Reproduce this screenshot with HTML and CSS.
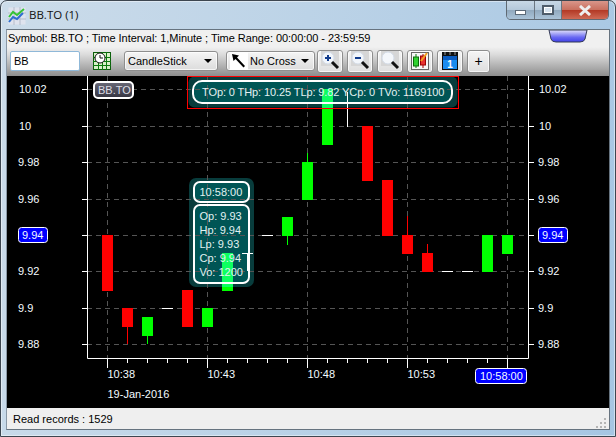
FILE: index.html
```html
<!DOCTYPE html>
<html lang="en">
<head>
<meta charset="utf-8">
<title>BB.TO (1)</title>
<link rel="stylesheet" href="styles.css">
</head>
<body>
<div class="window">
  <header class="titlebar">
    <svg class="app-icon" width="18" height="18" viewBox="0 0 18 18">
      <rect x="0.5" y="0.5" width="17" height="17" fill="#dfe3ee"/>
      <path d="M0 6H18M0 12H18M6 0V18M12 0V18" stroke="#b4bccb" fill="none"/>
      <path d="M1 15L5 10L9 12L15 6" stroke="#2f6fd0" stroke-width="2" fill="none"/>
      <path d="M1 10L5 5L9 8L16 2" stroke="#35c435" stroke-width="2" fill="none"/>
    </svg>
    <span class="title">BB.TO (1)</span>
    <div class="caption">
      <span class="cap cap-min"><i class="glyph-min"></i></span>
      <span class="cap cap-max"><i class="glyph-max"></i></span>
      <span class="cap cap-close">
        <svg width="14" height="11" viewBox="0 0 14 11"><path d="M2 1L12 10M12 1L2 10" stroke="#eeeeee" stroke-width="3" fill="none"/></svg>
      </span>
    </div>
  </header>

  <div class="client">
    <div class="infobar">
      <span>Symbol: BB.TO ; Time Interval: 1,Minute ; Time Range: 00:00:00 - 23:59:59</span>
      <svg class="tab" width="40" height="13" viewBox="0 0 40 13">
        <defs><linearGradient id="tabg" x1="0" y1="0" x2="0" y2="1"><stop offset="0" stop-color="#e4e4fb"/><stop offset="0.6" stop-color="#6a6af2"/><stop offset="1" stop-color="#4040e8"/></linearGradient></defs>
        <path d="M1 0L3 9Q4 12 8 12H32Q36 12 37 9L39 0Z" fill="url(#tabg)" stroke="#333a55"/>
      </svg>
    </div>

    <div class="toolbar">
      <div class="search">BB</div>
      <span class="plain-icon">
        <svg width="18" height="18" viewBox="0 0 18 18">
          <rect x="0.5" y="0.5" width="17" height="17" fill="#d8f0c8" stroke="#0d5e0d"/>
          <path d="M0 5.500H18M0 9.500H18M0 13.500H18M5.500 0V18M9.500 0V18M13.500 0V18" stroke="#0d7a0d" fill="none"/>
          <circle cx="7" cy="6" r="5" fill="#fff" stroke="#111"/>
          <path d="M7 3V6H10" stroke="#111" fill="none"/>
        </svg>
      </span>
      <div class="combo combo-type"><span>CandleStick</span><i class="caret"></i></div>
      <div class="combo combo-cross">
        <svg class="cross-icon" width="18" height="18" viewBox="0 0 18 18">
          <rect width="18" height="18" fill="#fff"/>
          <path d="M2 2L9 3.500L7 5.500L15 14L13.500 15.500L5.500 7L3.500 9Z" fill="#000"/>
        </svg>
        <span>No Cross</span><i class="caret"></i>
      </div>
      <div class="btn-group">
        <button class="tool">
          <svg width="20" height="20" viewBox="0 0 20 20"><rect x="1" width="18" height="15" fill="#d6d6d6"/><circle cx="8" cy="7" r="6" fill="#f2f6fb" stroke="#d4dce8"/><path d="M5 7H11M8 4V10" stroke="#123c8c" stroke-width="2"/><path d="M12 11L18 17" stroke="#111" stroke-width="3"/></svg>
        </button>
        <button class="tool">
          <svg width="20" height="20" viewBox="0 0 20 20"><rect x="1" width="18" height="15" fill="#d6d6d6"/><circle cx="8" cy="7" r="6" fill="#f2f6fb" stroke="#d4dce8"/><path d="M5 7H11" stroke="#123c8c" stroke-width="2"/><path d="M12 11L18 17" stroke="#111" stroke-width="3"/></svg>
        </button>
        <button class="tool">
          <svg width="20" height="20" viewBox="0 0 20 20"><rect x="1" width="18" height="15" fill="#d6d6d6"/><circle cx="8" cy="7" r="6" fill="#f4f7fb" stroke="#d4dce8"/><path d="M12 11L18 17" stroke="#111" stroke-width="3"/></svg>
        </button>
        <button class="tool">
          <svg width="20" height="20" viewBox="0 0 20 20"><rect x="1.500" y="1.500" width="17" height="17" fill="#f6f6f6" stroke="#666"/><path d="M6 3V17" stroke="#0a7a0a"/><rect x="3.500" y="6" width="5" height="9" fill="#30d030" stroke="#0a6a0a"/><path d="M13 3V17" stroke="#a00"/><rect x="10.500" y="5" width="5" height="9" fill="#e83030" stroke="#900"/><path d="M11 10L17 2" stroke="#f0a020" stroke-width="2"/></svg>
        </button>
        <button class="tool">
          <svg width="20" height="20" viewBox="0 0 20 20"><rect x="2" y="1" width="16" height="18" fill="#111"/><rect x="3" y="5" width="14" height="13" fill="#1a8cf0"/><rect x="3" y="5" width="14" height="4" fill="#0b5cc0"/><path d="M5 1V4M10 1V4M15 1V4" stroke="#999"/><text class="cal-num" x="10" y="17">1</text></svg>
        </button>
        <button class="tool tool-plus">+</button>
      </div>
    </div>

    <svg class="chart" width="602" height="332" viewBox="7 76 602 332">
      <defs>
        <linearGradient id="symg" x1="0" y1="0" x2="0" y2="1"><stop offset="0" stop-color="#6a6a78"/><stop offset="1" stop-color="#33333f"/></linearGradient>
      </defs>
      <rect class="bg" x="7" y="76" width="602" height="332"/>

      <!-- tooltip panels sit beneath the grid and candles -->
      <rect class="panel" x="188.500" y="76.500" width="269" height="31" rx="6"/>
      <rect class="panel-in" x="193" y="81" width="259" height="22" rx="9"/>
      <rect class="panel" x="189" y="178" width="65" height="109" rx="7"/>
      <rect class="panel-in" x="194" y="182" width="55" height="20" rx="6"/>
      <rect class="panel-in" x="194" y="205" width="55" height="78" rx="6"/>

      <path class="grid" d="M87 89.500H528M87 126.500H528M87 162.500H528M87 199.500H528M87 235.500H528M87 271.500H528M87 308.500H528M87 344.500H528M107.500 76V358M207.500 76V358M307.500 76V358M407.500 76V358M507.500 76V358"/>

      <path class="axis" d="M87.500 76V358.500H528.500V76"/>
      <path class="axis" d="M82 89.500H87M82 126.500H87M82 162.500H87M82 199.500H87M82 235.500H87M82 271.500H87M82 308.500H87M82 344.500H87M528 89.500H534M528 126.500H534M528 162.500H534M528 199.500H534M528 235.500H534M528 271.500H534M528 308.500H534M528 344.500H534"/>
      <path class="axis" d="M107.500 358V368M207.500 358V368M307.500 358V368M407.500 358V368M507.500 358V368M127.500 358V363M147.500 358V363M167.500 358V363M187.500 358V363M227.500 358V363M247.500 358V363M267.500 358V363M287.500 358V363M327.500 358V363M347.500 358V363M367.500 358V363M387.500 358V363M427.500 358V363M447.500 358V363M467.500 358V363M487.500 358V363"/>

      <!-- wicks -->
      <path class="wick-r" d="M127.500 327V344M407.500 216V235M427.500 244V253"/>
      <path class="wick-g" d="M147.500 336V344M287.500 236V245M307.500 153V162"/>
      <path class="wick-w" d="M247.500 253V271M347.500 92V127"/>
      <path class="doji" d="M162 308.500H173M242 253.500H253M262 235.500H273M442 271.500H453M462 271.500H473"/>

      <!-- candle bodies -->
      <rect class="red" x="102" y="235" width="11" height="56"/>
      <rect class="red" x="122" y="308" width="11" height="19"/>
      <rect class="green" x="142" y="317" width="11" height="19"/>
      <rect class="red" x="182" y="290" width="11" height="37"/>
      <rect class="green" x="202" y="308" width="11" height="19"/>
      <rect class="green" x="222" y="287" width="11" height="4"/>
      <rect class="tint" x="222" y="253" width="11" height="34"/>
      <rect class="green" x="282" y="217" width="11" height="19"/>
      <rect class="green" x="302" y="162" width="11" height="38"/>
      <rect class="green" x="322" y="108" width="11" height="37"/>
      <rect class="tint" x="322" y="89" width="11" height="19"/>
      <rect class="red" x="362" y="126" width="11" height="55"/>
      <rect class="red" x="382" y="180" width="11" height="56"/>
      <rect class="red" x="402" y="235" width="11" height="19"/>
      <rect class="red" x="422" y="253" width="11" height="19"/>
      <rect class="green" x="482" y="235" width="11" height="37"/>
      <rect class="green" x="502" y="235" width="11" height="19"/>

      <!-- tooltip outlines and text -->
      <rect class="outline" x="193" y="81" width="259" height="22" rx="9"/>
      <rect class="alert" x="187.500" y="76.500" width="271" height="32"/>
      <text class="lbl tip tip-long" x="202" y="96">TOp: 0 THp: 10.25 TLp: 9.82 YCp: 0 TVo: 1169100</text>
      <rect class="outline" x="194" y="182" width="55" height="20" rx="6"/>
      <rect class="outline" x="194" y="205" width="55" height="78" rx="6"/>
      <text class="lbl tip" x="199.500" y="196">10:58:00</text>
      <text class="lbl tip" x="199.500" y="220">Op: 9.93</text>
      <text class="lbl tip" x="199.500" y="234">Hp: 9.94</text>
      <text class="lbl tip" x="199.500" y="248">Lp: 9.93</text>
      <text class="lbl tip" x="199.500" y="262">Cp: 9.94</text>
      <text class="lbl tip" x="199.500" y="276">Vo: 1200</text>

      <rect class="sym-box" x="94" y="82" width="39" height="16" rx="4" fill="url(#symg)"/>
      <text class="lbl sym" x="98" y="94">BB.TO</text>

      <!-- left scale -->
      <text class="lbl" x="19" y="93">10.02</text>
      <text class="lbl" x="19" y="130">10</text>
      <text class="lbl" x="18" y="166">9.98</text>
      <text class="lbl" x="18" y="203">9.96</text>
      <text class="lbl" x="18" y="275">9.92</text>
      <text class="lbl" x="18" y="312">9.9</text>
      <text class="lbl" x="18" y="348">9.88</text>
      <rect class="now" x="18.500" y="227.500" width="29" height="15" rx="3"/>
      <text class="lbl" x="22" y="239">9.94</text>

      <!-- right scale -->
      <text class="lbl" x="539" y="93">10.02</text>
      <text class="lbl" x="539" y="130">10</text>
      <text class="lbl" x="538" y="166">9.98</text>
      <text class="lbl" x="538" y="203">9.96</text>
      <text class="lbl" x="538" y="275">9.92</text>
      <text class="lbl" x="538" y="312">9.9</text>
      <text class="lbl" x="538" y="348">9.88</text>
      <rect class="now" x="538.500" y="227.500" width="29" height="15" rx="3"/>
      <text class="lbl" x="542" y="239">9.94</text>

      <!-- time scale -->
      <text class="lbl" x="107.500" y="378">10:38</text>
      <text class="lbl" x="207.500" y="378">10:43</text>
      <text class="lbl" x="307.500" y="378">10:48</text>
      <text class="lbl" x="407.500" y="378">10:53</text>
      <text class="lbl" x="107.500" y="398">19-Jan-2016</text>
      <rect class="now" x="475.500" y="368.500" width="51" height="15" rx="3"/>
      <text class="lbl" x="480" y="380">10:58:00</text>
    </svg>

    <footer class="status">
      <span>Read records : 1529</span>
      <svg class="grip" width="12" height="12" viewBox="0 0 12 12"><path d="M9 1h2v2h-2zM5 5h2v2h-2zM9 5h2v2h-2zM1 9h2v2h-2zM5 9h2v2h-2zM9 9h2v2h-2z" fill="#b5b5b5"/></svg>
    </footer>
  </div>
</div>
</body>
</html>
```

FILE: styles.css
```css
* { box-sizing: border-box; }
html, body { margin: 0; padding: 0; }
body {
  width: 616px;
  height: 437px;
  overflow: hidden;
  background: #d8e4ef;
  font-family: "Liberation Sans", Arial, sans-serif;
  font-size: 11px;
  color: #000;
}
.window {
  width: 616px;
  height: 437px;
  display: flex;
  flex-direction: column;
  border: 1px solid #3d4650;
  border-radius: 7px 7px 0 0;
  background: linear-gradient(100deg, #ccdcea 0%, #bcd3e7 45%, #a6c6e3 100%);
  box-shadow: inset 0 0 0 1px rgba(255, 255, 255, .45);
}
.titlebar {
  height: 28px;
  flex: none;
  display: flex;
  align-items: flex-start;
  padding: 0 6px 0 7px;
}
.app-icon { margin-top: 6px; }
.title {
  margin: 5px 0 0 3px;
  font-family: "Open Sans", sans-serif;
  font-size: 11.500px;
  line-height: 18px;
  color: #111;
}
.caption {
  margin-left: auto;
  display: flex;
  height: 19px;
  border: 1px solid #5f6973;
  border-top: 0;
  border-radius: 0 0 5px 5px;
  overflow: hidden;
}
.cap {
  display: flex;
  align-items: center;
  justify-content: center;
  height: 100%;
  background: linear-gradient(#c8d8e6 0%, #b4c8da 48%, #92aabf 52%, #aac3d8 100%);
  border-right: 1px solid #6b7681;
}
.cap-min { width: 28px; }
.cap-max { width: 27px; }
.cap-close {
  width: 46px;
  border-right: 0;
  background: linear-gradient(#d9968a 0%, #c9705f 48%, #b33a26 52%, #cf6a55 100%);
}
.glyph-min { display: block; width: 11px; height: 5px; margin-top: 5px; background: #fff; border: 1px solid #5c6a78; }
.glyph-max { display: block; width: 12px; height: 10px; background: #d8e4ef; border: 2px solid #4f5d6b; box-shadow: inset 0 0 0 1px #fff; }
.client {
  flex: 1;
  min-height: 0;
  margin: 0 5px 6px 5px;
  display: flex;
  flex-direction: column;
  border: 1px solid #66737f;
  border-left-color: #8a98a6;
  background: #f0f0f0;
}
.infobar {
  height: 17px;
  flex: none;
  display: flex;
  align-items: flex-start;
  justify-content: space-between;
  padding: 0 21px 0 1px;
  line-height: 17px;
  letter-spacing: -0.05px;
  background: #f0f0f0;
  white-space: nowrap;
}
.tab { margin-top: 0; }
.toolbar {
  height: 29px;
  flex: none;
  display: flex;
  align-items: center;
  padding: 0 0 1px 3px;
  background: linear-gradient(#f0f0f0 0%, #dcdcdc 25%, #8d8d8d 100%);
}
.search {
  width: 70px;
  height: 20px;
  padding-left: 3px;
  line-height: 18px;
  border: 1px solid #8fb8d8;
  border-radius: 2px;
  background: #fff;
}
.plain-icon { display: flex; margin-left: 13px; }
.combo {
  height: 20px;
  display: flex;
  align-items: center;
  border: 1px solid #8e8e8e;
  border-radius: 3px;
  background: linear-gradient(#f5f5f5, #dcdcdc);
  box-shadow: inset 0 0 0 1px rgba(255, 255, 255, .7);
}
.combo-type { width: 94px; margin-left: 13px; padding-left: 3px; }
.combo-cross { width: 89px; margin-left: 8px; padding-left: 3px; }
.cross-icon { flex: none; margin-right: 2px; }
.caret {
  margin-left: auto;
  margin-right: 5px;
  width: 0;
  height: 0;
  border: 4px solid transparent;
  border-top: 4px solid #000;
  border-bottom: 0;
}
.btn-group { display: flex; margin-left: 2px; gap: 4px; }
.tool {
  width: 26px;
  height: 23px;
  padding: 0;
  display: flex;
  align-items: center;
  justify-content: center;
  border: 1px solid #8e8e8e;
  border-radius: 3px;
  background: linear-gradient(#f5f5f5, #dedede);
  box-shadow: inset 0 0 0 1px rgba(255, 255, 255, .7);
  color: #000;
  font: 14px "Liberation Sans", sans-serif;
}
.tool-plus { width: 23px; }
.cal-num { font: bold 10px "Liberation Sans", sans-serif; fill: #fff; text-anchor: middle; }
.chart { display: block; flex: none; }
.bg { fill: #000; }
.panel { fill: #083c3c; }
.panel-in { fill: #005555; }
.grid { fill: none; stroke: #555; stroke-dasharray: 5 4; }
.axis { fill: none; stroke: #fff; }
.wick-r { fill: none; stroke: #f00; }
.wick-g { fill: none; stroke: #0f0; }
.wick-w { fill: none; stroke: #fff; }
.doji { fill: none; stroke: #fff; }
.red { fill: #f00; }
.green { fill: #0f0; }
.tint { fill: #0cff60; }
.outline { fill: none; stroke: #fff; stroke-width: 2; }
.alert { fill: none; stroke: #f00; }
.lbl { font-family: "Liberation Sans", sans-serif; font-size: 11px; fill: #f4fbff; }
.tip { fill: #e2f2f2; }
.tip-long { letter-spacing: -0.1px; }
.sym { fill: #dcdce4; }
.sym-box { stroke: #fff; stroke-width: 2; }
.now { fill: #00f; stroke: #fff; }
.status {
  flex: 1;
  min-height: 0;
  display: flex;
  align-items: center;
  justify-content: space-between;
  padding: 0 2px 0 6px;
  background: #efefef;
}
.grip { align-self: flex-end; }
```
